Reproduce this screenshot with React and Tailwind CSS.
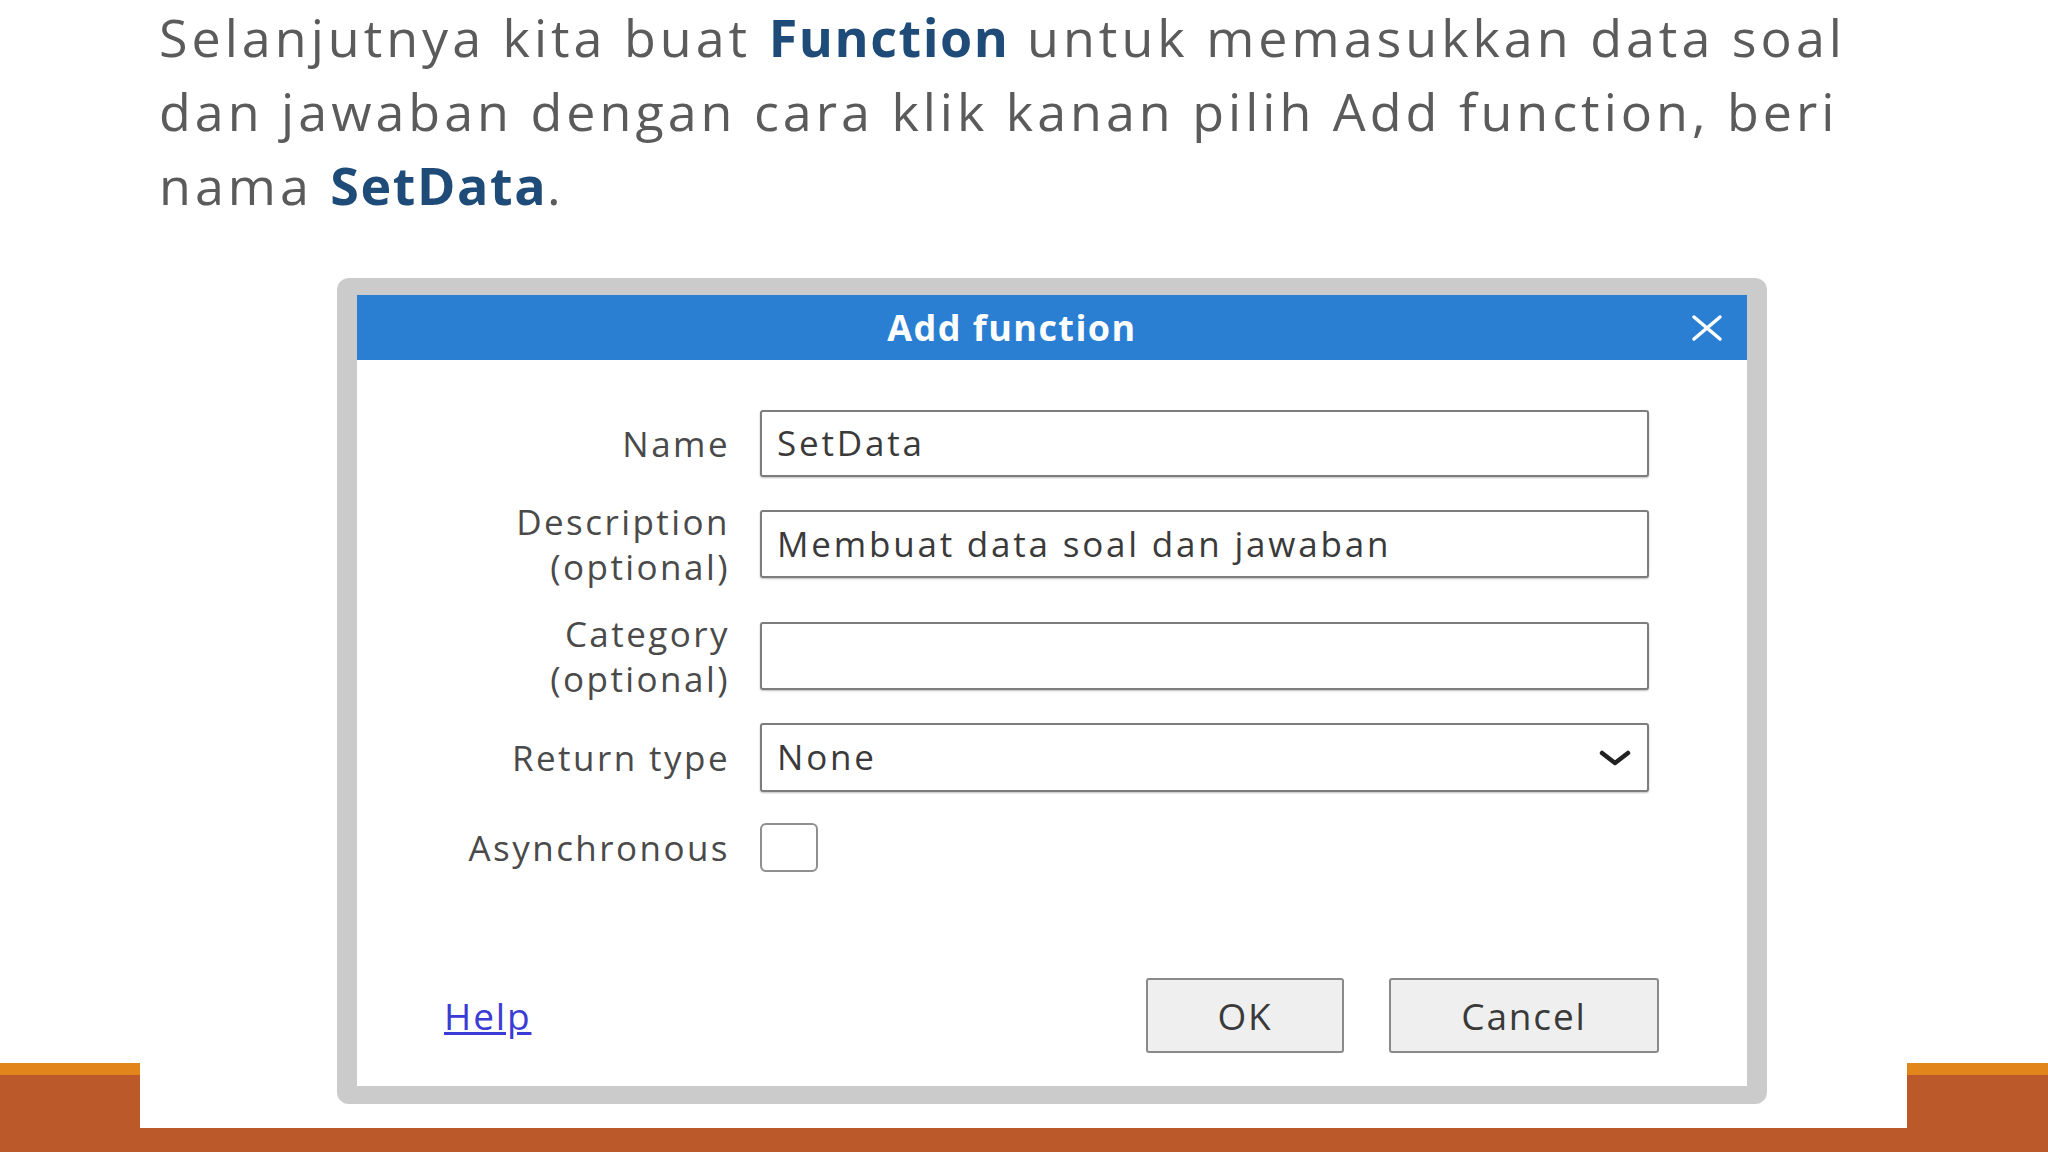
import React from "react";

const dlgFont = { fontFamily: '"Open Sans", "Noto Sans", sans-serif' };

function Field({ label, children, labelLines, className = "", h = "h-[68px]" }) {
  return (
    <div className={`flex items-center ${h} ${className}`}>
      <div className="w-[373px] shrink-0 text-right text-[35px] leading-[45px] tracking-[0.07em] text-[#4a4a4a]">
        {labelLines ? labelLines.map((l) => <div key={l}>{l}</div>) : label}
      </div>
      <div className="ml-[30px]">{children}</div>
    </div>
  );
}

function TextBox({ value, h = "h-[68px]" }) {
  return (
    <div
      className={`w-[889px] ${h} flex items-center border-2 border-[#7d7d7d] rounded-[3px] bg-white pl-[15px] text-[35px] tracking-[0.08em] text-[#3a3a3a] shadow-[0_1px_2px_rgba(0,0,0,0.25)]`}
    >
      {value}
    </div>
  );
}

function AddFunctionDialog() {
  return (
    <div
      className="ml-[197px] mt-[56px] w-[1430px] h-[826px] bg-[#cbcbcb] rounded-[12px] pt-[17px] px-[20px] pb-[18px]"
      style={dlgFont}
    >
      <div className="h-full bg-white flex flex-col">
        <div className="h-[65px] bg-[#2a7fd3] flex items-center">
          <div className="flex-1 text-center text-white font-bold text-[36px] tracking-[0.04em]">
            Add function
          </div>
          <div className="w-[80px] flex items-center justify-center">
            <svg width="34" height="28" viewBox="0 0 34 28">
              <path d="M4 3 L30 25 M30 3 L4 25" stroke="#fff" strokeWidth="3.5" strokeLinecap="round" />
            </svg>
          </div>
        </div>

        <div className="flex flex-col pt-[50px]">
          <Field label="Name" h="h-[67px]">
            <TextBox value="SetData" h="h-[67px]" />
          </Field>
          <Field labelLines={["Description", "(optional)"]} className="mt-[33px]">
            <TextBox value="Membuat data soal dan jawaban" />
          </Field>
          <Field labelLines={["Category", "(optional)"]} className="mt-[44px]">
            <TextBox value="" />
          </Field>
          <Field label="Return type" className="mt-[33px]" h="h-[69px]">
            <div className="w-[889px] h-[69px] flex items-center justify-between border-2 border-[#7d7d7d] rounded-[3px] bg-white pl-[15px] pr-[16px] text-[35px] tracking-[0.08em] text-[#3a3a3a] shadow-[0_1px_2px_rgba(0,0,0,0.25)]">
              <span>None</span>
              <svg width="32" height="16" viewBox="0 0 32 16">
                <path d="M3 3 L16 13 L29 3" fill="none" stroke="#222" strokeWidth="4.5" strokeLinecap="round" strokeLinejoin="round" />
              </svg>
            </div>
          </Field>
          <Field label="Asynchronous" className="mt-[31px]" h="h-[49px]">
            <div className="w-[58px] h-[49px] border-2 border-[#8f8f8f] rounded-[6px] bg-white" />
          </Field>
        </div>

        <div className="mt-auto flex items-center pl-[87px] pr-[88px] pb-[33px]">
          <a className="text-[37px] text-[#3b3bd6] underline tracking-[0.05em]">Help</a>
          <div className="ml-auto flex gap-[45px]">
            <button className="w-[198px] h-[75px] bg-[#efefef] border-2 border-[#8a8a8a] rounded-[3px] text-[37px] text-[#3a3a3a] tracking-[0.05em]">
              OK
            </button>
            <button className="w-[270px] h-[75px] bg-[#efefef] border-2 border-[#8a8a8a] rounded-[3px] text-[37px] text-[#3a3a3a] tracking-[0.05em]">
              Cancel
            </button>
          </div>
        </div>
      </div>
    </div>
  );
}

export default function App() {
  return (
    <div className="flex h-[1152px] w-full bg-[#bc592b] overflow-hidden">
      <div className="w-[140px] shrink-0 flex flex-col">
        <div className="h-[1063px] bg-white" />
        <div className="h-[12px] bg-[#e2851a]" />
      </div>

      <div className="flex-1 h-[1128px] bg-white">
        <p
          className="pl-[19px] text-[52px] leading-[74px] tracking-[0.077em] text-[#5b5b5b] whitespace-nowrap"
          style={{ fontFamily: '"Open Sans", "Lato", sans-serif' }}
        >
          Selanjutnya kita buat <b className="text-[#1f4b78] font-bold tracking-[0.03em]">Function</b> untuk memasukkan data soal
          <br />
          dan jawaban dengan cara klik kanan pilih Add function, beri
          <br />
          nama <b className="text-[#1f4b78] font-bold tracking-[0.03em]">SetData</b>.
        </p>
        <AddFunctionDialog />
      </div>

      <div className="w-[141px] shrink-0 flex flex-col">
        <div className="h-[1063px] bg-white" />
        <div className="h-[12px] bg-[#e2851a]" />
      </div>
    </div>
  );
}
